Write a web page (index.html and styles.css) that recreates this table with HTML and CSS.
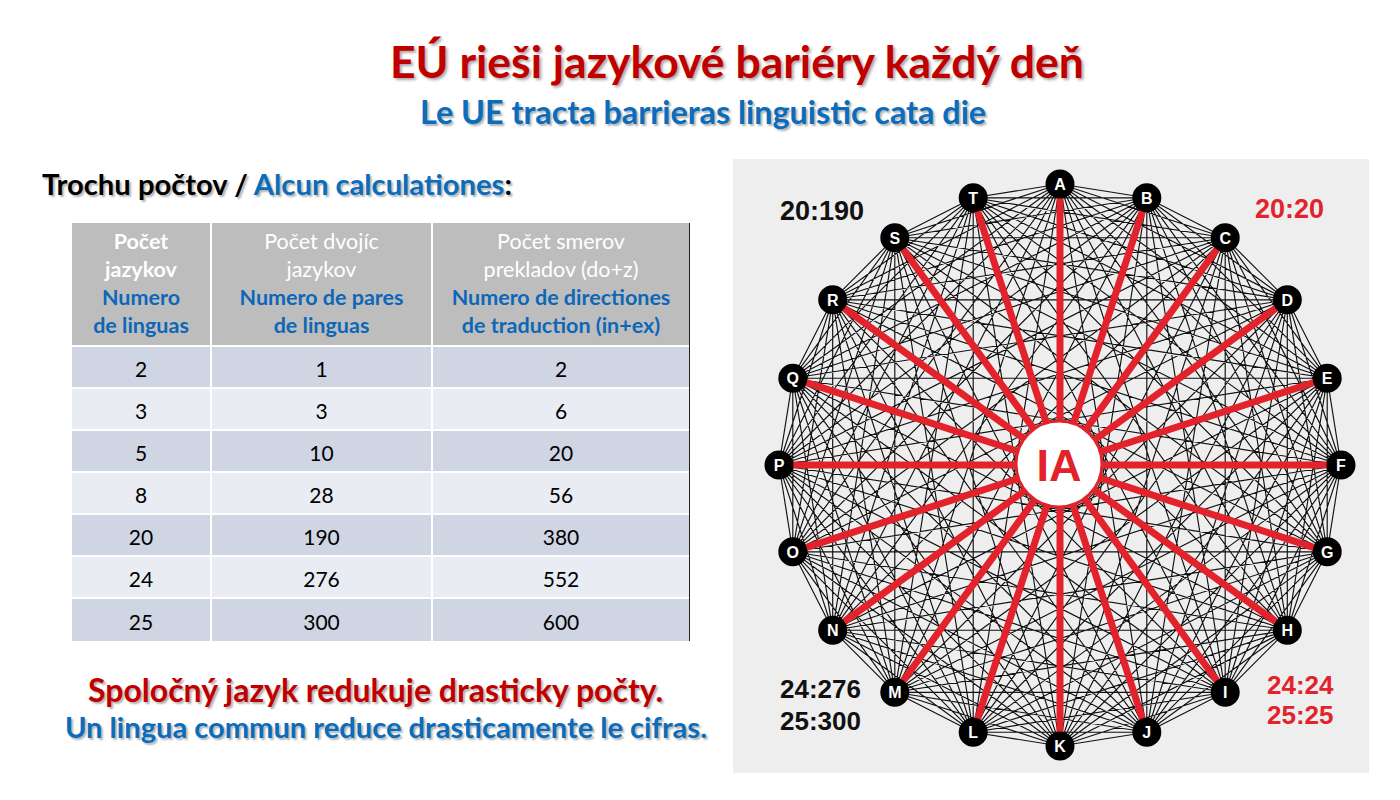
FILE: index.html
```html
<!DOCTYPE html>
<html lang="sk">
<head>
<meta charset="utf-8">
<title>EÚ rieši jazykové bariéry každý deň</title>
<link rel="stylesheet" href="styles.css">
</head>
<body>
<div class="slide">
  <header class="head">
    <h1 class="title">EÚ rieši jazykové bariéry každý deň</h1>
    <h2 class="subtitle">Le UE tracta barrieras linguistic cata die</h2>
  </header>
  <main class="main">
    <section class="left">
      <h3 class="calc">Trochu počtov / <span class="blue">Alcun calculationes</span>:</h3>
      <table class="tbl">
        <colgroup><col class="c1"><col class="c2"><col class="c3"></colgroup>
        <thead>
          <tr class="hrow">
            <th><span class="wb">Počet<br>jazykov</span><br><span class="bl">Numero<br>de linguas</span></th>
            <th><span class="wr">Počet dvojíc<br>jazykov</span><br><span class="bl">Numero de pares<br>de linguas</span></th>
            <th><span class="wr">Počet smerov<br>prekladov (do+z)</span><br><span class="bl">Numero de directiones<br>de traduction (in+ex)</span></th>
          </tr>
        </thead>
        <tbody>
          <tr class="dk"><td>2</td><td>1</td><td>2</td></tr>
          <tr class="lt"><td>3</td><td>3</td><td>6</td></tr>
          <tr class="dk"><td>5</td><td>10</td><td>20</td></tr>
          <tr class="lt"><td>8</td><td>28</td><td>56</td></tr>
          <tr class="dk"><td>20</td><td>190</td><td>380</td></tr>
          <tr class="lt"><td>24</td><td>276</td><td>552</td></tr>
          <tr class="dk last"><td>25</td><td>300</td><td>600</td></tr>
        </tbody>
      </table>
      <p class="foot1">Spoločný jazyk redukuje drasticky počty.</p>
      <p class="foot2">Un lingua commun reduce drasticamente le cifras.</p>
    </section>
    <section class="panel">
      <svg class="diagram" width="636" height="614" viewBox="0 0 636 614" xmlns="http://www.w3.org/2000/svg">
        <g id="mesh"></g>
        <g id="spokes"></g>
        <circle class="hub" cx="326" cy="305" r="43"/>
        <text class="hubtxt" x="326" y="322">IA</text>
        <g class="nodes">
          <g transform="translate(327,25)"><circle r="14.5"/><text y="5.8">A</text></g>
          <g transform="translate(413.8,38.7)"><circle r="14.5"/><text y="5.8">B</text></g>
          <g transform="translate(492.2,78.7)"><circle r="14.5"/><text y="5.8">C</text></g>
          <g transform="translate(554.3,140.8)"><circle r="14.5"/><text y="5.8">D</text></g>
          <g transform="translate(594.2,219.2)"><circle r="14.5"/><text y="5.8">E</text></g>
          <g transform="translate(608,306)"><circle r="14.5"/><text y="5.8">F</text></g>
          <g transform="translate(594.2,392.8)"><circle r="14.5"/><text y="5.8">G</text></g>
          <g transform="translate(554.3,471.2)"><circle r="14.5"/><text y="5.8">H</text></g>
          <g transform="translate(492.2,533.3)"><circle r="14.5"/><text y="5.8">I</text></g>
          <g transform="translate(413.8,573.3)"><circle r="14.5"/><text y="5.8">J</text></g>
          <g transform="translate(327,587)"><circle r="14.5"/><text y="5.8">K</text></g>
          <g transform="translate(240.2,573.3)"><circle r="14.5"/><text y="5.8">L</text></g>
          <g transform="translate(161.8,533.3)"><circle r="14.5"/><text y="5.8">M</text></g>
          <g transform="translate(99.7,471.2)"><circle r="14.5"/><text y="5.8">N</text></g>
          <g transform="translate(59.8,392.8)"><circle r="14.5"/><text y="5.8">O</text></g>
          <g transform="translate(46,306)"><circle r="14.5"/><text y="5.8">P</text></g>
          <g transform="translate(59.8,219.2)"><circle r="14.5"/><text y="5.8">Q</text></g>
          <g transform="translate(99.7,140.8)"><circle r="14.5"/><text y="5.8">R</text></g>
          <g transform="translate(161.8,78.7)"><circle r="14.5"/><text y="5.8">S</text></g>
          <g transform="translate(240.2,38.7)"><circle r="14.5"/><text y="5.8">T</text></g>
        </g>
        <text class="lbl" x="47" y="61">20:190</text>
        <text class="lbl red" x="522" y="59">20:20</text>
        <text class="lbl sm" x="47" y="539">24:276</text>
        <text class="lbl sm" x="47" y="571">25:300</text>
        <text class="lbl sm red" x="534" y="535">24:24</text>
        <text class="lbl sm red" x="534" y="565">25:25</text>
      </svg>
    </section>
  </main>
</div>
<script src="script.js"></script>
</body>
</html>
```

FILE: styles.css
```css
* { box-sizing: border-box; }
html, body { margin: 0; padding: 0; background: #ffffff; }
body { font-family: Lato, "Liberation Sans", sans-serif; }

.slide {
  width: 1400px;
  height: 800px;
  overflow: hidden;
  display: flex;
  flex-direction: column;
}

.head { height: 159px; padding-top: 33px; }
.title {
  margin: 0 0 0 390px;
  font-size: 44.5px;
  line-height: 56px;
  font-weight: 700;
  color: #c00000;
  white-space: nowrap;
  text-shadow: 2px 2px 3px rgba(0,0,0,0.35);
}
.subtitle {
  margin: 5px 0 0 420px;
  font-size: 32.3px;
  line-height: 36px;
  font-weight: 700;
  color: #0a6cbd;
  white-space: nowrap;
  text-shadow: 2px 2px 2px rgba(0,0,0,0.3);
}

.main {
  display: grid;
  grid-template-columns: 733px 636px;
  height: 614px;
}

.left { padding-top: 8px; }
.calc {
  margin: 0 0 22px 42px;
  font-size: 29.2px;
  line-height: 34px;
  font-weight: 700;
  color: #000;
  white-space: nowrap;
  text-shadow: 2px 2px 2px rgba(0,0,0,0.3);
}
.blue { color: #0a6cbd; }

.tbl {
  margin-left: 72px;
  width: 617px;
  table-layout: fixed;
  border-collapse: separate;
  border-spacing: 0;
  box-shadow: 1px 0 0 #222;
  font-size: 21px;
  color: #000;
}
.tbl col.c1 { width: 140px; }
.tbl col.c2 { width: 221px; }
.tbl col.c3 { width: 256px; }
.tbl th, .tbl td {
  padding: 0;
  text-align: center;
  vertical-align: middle;
  border-right: 2px solid #fff;
  border-bottom: 2px solid #fff;
}
.tbl th:last-child, .tbl td:last-child { border-right: 0; }
.tbl tr.last td { border-bottom: 0; }
.hrow { height: 124px; }
.tbl th {
  background: #bdbdbd;
  line-height: 28px;
  font-size: 21.5px;
  padding-bottom: 2px;
}
.wb { color: #fff; font-weight: 700; }
.wr { color: #fff; font-weight: 400; }
.bl { color: #0d67b9; font-weight: 700; }
.tbl tbody tr { height: 42px; }
.tbl td { font-size: 21px; line-height: 24px; padding-top: 3px; }
.dk td { background: #cfd5e3; }
.lt td { background: #e9ecf3; }

.foot1 {
  margin: 31px 0 0 88px;
  font-size: 32px;
  line-height: 36px;
  font-weight: 700;
  color: #c00000;
  white-space: nowrap;
  text-shadow: 2px 2px 2px rgba(0,0,0,0.3);
}
.foot2 {
  margin: 2px 0 0 65px;
  font-size: 29.1px;
  line-height: 34px;
  font-weight: 700;
  color: #0a6cbd;
  white-space: nowrap;
  text-shadow: 2px 2px 2px rgba(0,0,0,0.3);
}

.panel { background: #eeeeee; height: 614px; }
.diagram { display: block; }
.edges { fill: none; stroke: #111; stroke-width: 1.15; }
.spoke { fill: none; stroke: #e3232b; stroke-width: 7; }
.hub { fill: #fff; stroke: #e3232b; stroke-width: 3; }
.hubtxt {
  font-family: "Liberation Sans", Arial, sans-serif;
  font-weight: 700;
  font-size: 45px;
  fill: #e3232b;
  text-anchor: middle;
}
.nodes circle { fill: #000; }
.nodes text {
  font-family: "Liberation Sans", Arial, sans-serif;
  font-weight: 700;
  font-size: 16px;
  fill: #fff;
  text-anchor: middle;
}
.lbl {
  font-family: "Liberation Sans", Arial, sans-serif;
  font-weight: 700;
  font-size: 27px;
  fill: #111;
}
.lbl.sm { font-size: 26px; }
.lbl.red { fill: #e3232b; }
```

FILE: script.js
```js
(function () {
  var ns = 'http://www.w3.org/2000/svg';
  var cx = 327, cy = 306, R = 281, n = 20;
  var pts = [];
  for (var i = 0; i < n; i++) {
    var a = (-90 + 18 * i) * Math.PI / 180;
    pts.push([cx + R * Math.cos(a), cy + R * Math.sin(a)]);
  }
  var d = '';
  for (i = 0; i < n; i++) {
    for (var j = i + 1; j < n; j++) {
      d += 'M' + pts[i][0].toFixed(1) + ' ' + pts[i][1].toFixed(1) +
           'L' + pts[j][0].toFixed(1) + ' ' + pts[j][1].toFixed(1);
    }
  }
  var mesh = document.createElementNS(ns, 'path');
  mesh.setAttribute('d', d);
  mesh.setAttribute('class', 'edges');
  document.getElementById('mesh').appendChild(mesh);

  var s = '';
  for (i = 0; i < n; i++) {
    s += 'M' + cx + ' ' + cy + 'L' + pts[i][0].toFixed(1) + ' ' + pts[i][1].toFixed(1);
  }
  var sp = document.createElementNS(ns, 'path');
  sp.setAttribute('d', s);
  sp.setAttribute('class', 'spoke');
  document.getElementById('spokes').appendChild(sp);
})();
```
